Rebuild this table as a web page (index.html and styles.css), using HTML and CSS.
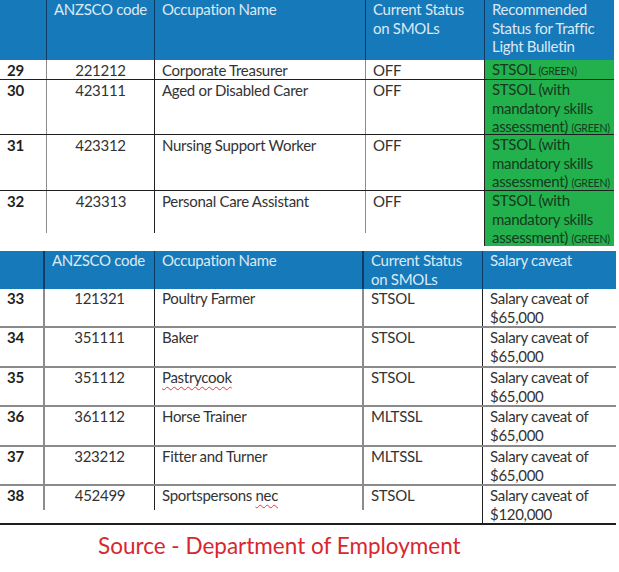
FILE: index.html
```html
<!DOCTYPE html>
<html lang="en">
<head>
<meta charset="utf-8">
<title>Traffic Light Bulletin</title>
<link rel="stylesheet" href="styles.css">
</head>
<body>
<div class="sheet">
  <div class="tbl t1">
    <div class="row head h1">
      <div></div>
      <div>ANZSCO code</div>
      <div>Occupation Name</div>
      <div>Current Status<br>on SMOLs</div>
      <div>Recommended<br>Status for Traffic<br>Light Bulletin</div>
    </div>
    <div class="row r20">
      <div class="num">29</div>
      <div class="code">221212</div>
      <div>Corporate Treasurer</div>
      <div>OFF</div>
      <div class="green">STSOL <small>(GREEN)</small></div>
    </div>
    <div class="row r55">
      <div class="num">30</div>
      <div class="code">423111</div>
      <div>Aged or Disabled Carer</div>
      <div>OFF</div>
      <div class="green">STSOL (with<br>mandatory skills<br>assessment) <small>(GREEN)</small></div>
    </div>
    <div class="row r56">
      <div class="num">31</div>
      <div class="code">423312</div>
      <div>Nursing Support Worker</div>
      <div>OFF</div>
      <div class="green">STSOL (with<br>mandatory skills<br>assessment) <small>(GREEN)</small></div>
    </div>
    <div class="row r55 last">
      <div class="num">32</div>
      <div class="code">423313</div>
      <div>Personal Care Assistant</div>
      <div>OFF</div>
      <div class="green">STSOL (with<br>mandatory skills<br>assessment) <small>(GREEN)</small></div>
    </div>
  </div>

  <div class="tbl t2">
    <div class="row head h2">
      <div></div>
      <div>ANZSCO code</div>
      <div>Occupation Name</div>
      <div>Current Status<br>on SMOLs</div>
      <div>Salary caveat</div>
    </div>
    <div class="row">
      <div class="num">33</div>
      <div class="code">121321</div>
      <div>Poultry Farmer</div>
      <div>STSOL</div>
      <div>Salary caveat of<br>$65,000</div>
    </div>
    <div class="row">
      <div class="num">34</div>
      <div class="code">351111</div>
      <div>Baker</div>
      <div>STSOL</div>
      <div>Salary caveat of<br>$65,000</div>
    </div>
    <div class="row">
      <div class="num">35</div>
      <div class="code">351112</div>
      <div><span class="sp">Pastrycook</span></div>
      <div>STSOL</div>
      <div>Salary caveat of<br>$65,000</div>
    </div>
    <div class="row">
      <div class="num">36</div>
      <div class="code">361112</div>
      <div>Horse Trainer</div>
      <div>MLTSSL</div>
      <div>Salary caveat of<br>$65,000</div>
    </div>
    <div class="row">
      <div class="num">37</div>
      <div class="code">323212</div>
      <div>Fitter and Turner</div>
      <div>MLTSSL</div>
      <div>Salary caveat of<br>$65,000</div>
    </div>
    <div class="row last">
      <div class="num">38</div>
      <div class="code">452499</div>
      <div>Sportspersons <span class="sp">nec</span></div>
      <div>STSOL</div>
      <div>Salary caveat of<br>$120,000</div>
    </div>
  </div>

  <p class="source">Source - Department of Employment</p>
</div>
</body>
</html>
```

FILE: styles.css
```css
* { box-sizing: border-box; }

html, body {
  margin: 0;
  padding: 0;
  background: #ffffff;
}

.sheet {
  font-family: Lato, "Open Sans", "Liberation Sans", sans-serif;
  font-size: 15px;
  line-height: 19px;
  letter-spacing: -0.3px;
  color: #333333;
}

.tbl {
  display: flex;
  flex-direction: column;
}

.t1 { width: 614px; --cols: 47px 108px 211px 119px 129px; }
.t2 { width: 616px; --cols: 45px 110px 209px 119px 133px; margin-top: 5px; }

.row {
  display: grid;
  grid-template-columns: var(--cols);
}

.row > div {
  padding: 0 2px 0 7px;
  overflow: hidden;
  white-space: nowrap;
}

/* column dividers */
.row > div:nth-child(1) { border-right: 1px solid #8c8c8c; }
.row > div:nth-child(2) { border-right: 1px solid #222222; }
.row > div:nth-child(3) { border-right: 1px solid #8c8c8c; }
.row > div:nth-child(4) { border-right: 1px solid #222222; }

.t2 .row > div:nth-child(1),
.t2 .row > div:nth-child(3) { border-right-width: 2px; }

/* header rows */
.row.head > div {
  background: #1679ba;
  color: #dce9f4;
  line-height: 18.5px;
  border-right: 1px solid #0d3c66;
}
.row.head > div:nth-child(5) { border-right: none; }
.h1 { height: 60px; }
.h2 { height: 38px; }
.h2 > div { padding-top: 0; }

/* table 1 body */
.t1 .row:not(.head) { border-bottom: 1px solid #1e1e1e; }
.t1 .row > div { padding-top: 1px; }
.t1 .row.head > div { padding-top: 0; }
.t1 .r20 { height: 20px; }
.t1 .r55 { height: 55px; }
.t1 .r56 { height: 56px; }
.t1 .row.last { border-bottom: none; }

.t1 .row.last > div:nth-child(1),
.t1 .row.last > div:nth-child(3) {
  border-right: none;
  background: linear-gradient(#8c8c8c, #8c8c8c) right top / 1px 42px no-repeat;
}
.t1 .row.last > div:nth-child(2) {
  border-right: none;
  background: linear-gradient(#222, #222) right top / 1px 42px no-repeat;
}

.green {
  background: #22b14c;
  color: #17391f;
  line-height: 18.5px;
}
.t1 .row > div.green { padding: 0 0 0 7px; }
.green small {
  font-size: 10.5px;
  letter-spacing: -0.2px;
}

/* table 2 body */
.t2 .row:not(.head) {
  height: 39.4px;
  border-bottom: 2px solid #8a8a8a;
}
.t2 .row.last { border-bottom: 2px solid #1e1e1e; }
.t2 .row.last > div:nth-child(1),
.t2 .row.last > div:nth-child(3) {
  border-right: none;
  background: linear-gradient(#8c8c8c, #8c8c8c) right top / 2px 24px no-repeat;
}
.t2 .row.last > div:nth-child(2) {
  border-right: none;
  background: linear-gradient(#222, #222) right top / 1px 24px no-repeat;
}

.num {
  font-weight: 700;
  color: #1f1f1f;
}
.row > div.code {
  text-align: center;
  padding: 0;
}
.t1 .row > div.code { padding-top: 1px; }

.sp {
  text-decoration: underline wavy #e0393e;
  text-decoration-thickness: 1px;
  text-underline-offset: 3px;
}

.source {
  margin: 7px 0 0 98px;
  font-size: 22.5px;
  line-height: 28px;
  letter-spacing: 0;
  color: #d7272f;
}
```
